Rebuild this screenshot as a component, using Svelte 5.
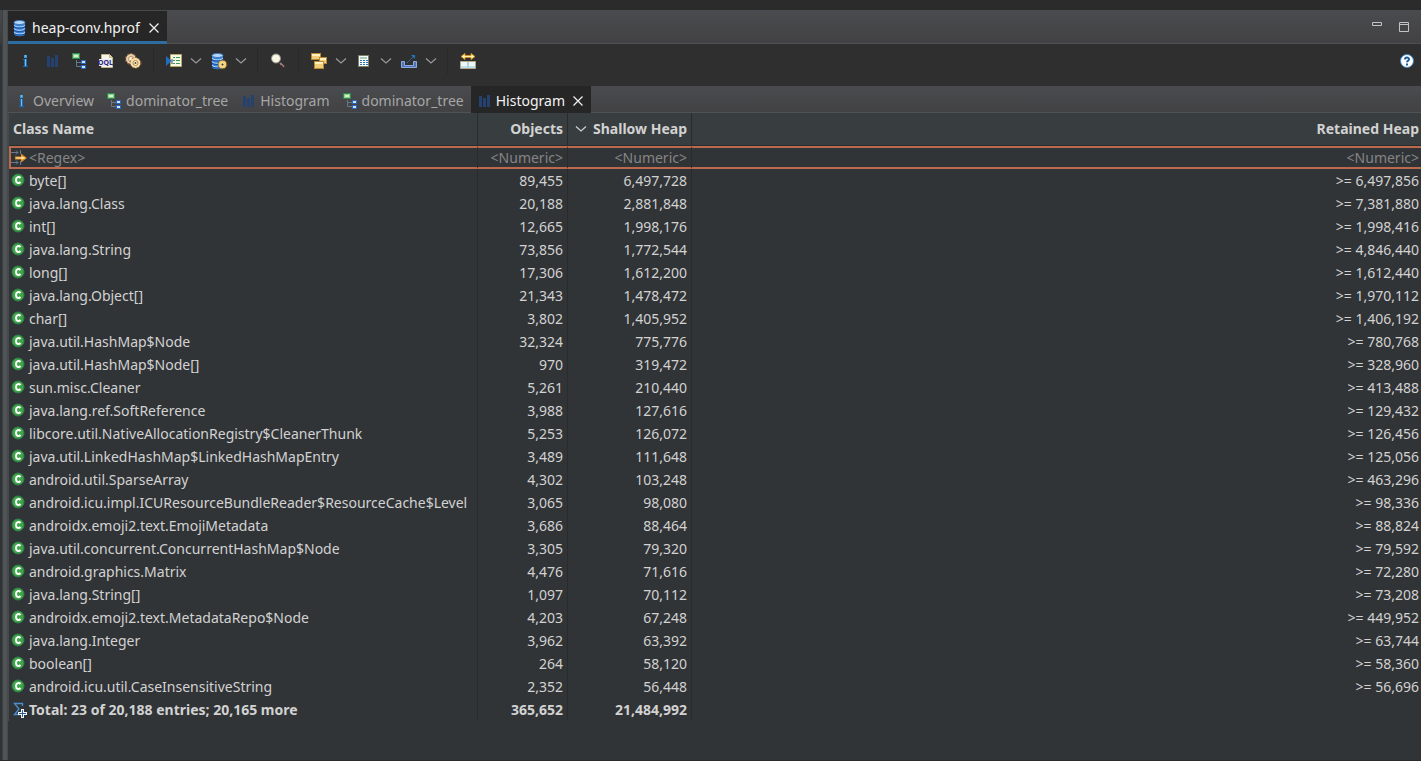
<script lang="ts">
	interface HeapRow {
		name: string;
		objects: number;
		shallow: number;
		retained: number;
	}

	const rows: HeapRow[] = [
		{ name: 'byte[]', objects: 89455, shallow: 6497728, retained: 6497856 },
		{ name: 'java.lang.Class', objects: 20188, shallow: 2881848, retained: 7381880 },
		{ name: 'int[]', objects: 12665, shallow: 1998176, retained: 1998416 },
		{ name: 'java.lang.String', objects: 73856, shallow: 1772544, retained: 4846440 },
		{ name: 'long[]', objects: 17306, shallow: 1612200, retained: 1612440 },
		{ name: 'java.lang.Object[]', objects: 21343, shallow: 1478472, retained: 1970112 },
		{ name: 'char[]', objects: 3802, shallow: 1405952, retained: 1406192 },
		{ name: 'java.util.HashMap$Node', objects: 32324, shallow: 775776, retained: 780768 },
		{ name: 'java.util.HashMap$Node[]', objects: 970, shallow: 319472, retained: 328960 },
		{ name: 'sun.misc.Cleaner', objects: 5261, shallow: 210440, retained: 413488 },
		{ name: 'java.lang.ref.SoftReference', objects: 3988, shallow: 127616, retained: 129432 },
		{ name: 'libcore.util.NativeAllocationRegistry$CleanerThunk', objects: 5253, shallow: 126072, retained: 126456 },
		{ name: 'java.util.LinkedHashMap$LinkedHashMapEntry', objects: 3489, shallow: 111648, retained: 125056 },
		{ name: 'android.util.SparseArray', objects: 4302, shallow: 103248, retained: 463296 },
		{ name: 'android.icu.impl.ICUResourceBundleReader$ResourceCache$Level', objects: 3065, shallow: 98080, retained: 98336 },
		{ name: 'androidx.emoji2.text.EmojiMetadata', objects: 3686, shallow: 88464, retained: 88824 },
		{ name: 'java.util.concurrent.ConcurrentHashMap$Node', objects: 3305, shallow: 79320, retained: 79592 },
		{ name: 'android.graphics.Matrix', objects: 4476, shallow: 71616, retained: 72280 },
		{ name: 'java.lang.String[]', objects: 1097, shallow: 70112, retained: 73208 },
		{ name: 'androidx.emoji2.text.MetadataRepo$Node', objects: 4203, shallow: 67248, retained: 449952 },
		{ name: 'java.lang.Integer', objects: 3962, shallow: 63392, retained: 63744 },
		{ name: 'boolean[]', objects: 264, shallow: 58120, retained: 58360 },
		{ name: 'android.icu.util.CaseInsensitiveString', objects: 2352, shallow: 56448, retained: 56696 }
	];

	const views = [
		{ icon: 'info', label: 'Overview' },
		{ icon: 'tree', label: 'dominator_tree' },
		{ icon: 'bars', label: 'Histogram' },
		{ icon: 'tree', label: 'dominator_tree' },
		{ icon: 'bars', label: 'Histogram' }
	];

	const toolGroups = [
		[
			{ icon: 'info', label: 'Overview', menu: false },
			{ icon: 'bars', label: 'Histogram', menu: false },
			{ icon: 'tree', label: 'Dominator tree', menu: false },
			{ icon: 'oql', label: 'Object query', menu: false },
			{ icon: 'gears', label: 'Thread overview', menu: false }
		],
		[
			{ icon: 'report', label: 'Run report', menu: true },
			{ icon: 'query', label: 'Query browser', menu: true }
		],
		[{ icon: 'search', label: 'Find object', menu: false }],
		[
			{ icon: 'group', label: 'Group by', menu: true },
			{ icon: 'calc', label: 'Calculate retained size', menu: true },
			{ icon: 'export', label: 'Export', menu: true }
		],
		[{ icon: 'compare', label: 'Compare', menu: false }]
	];

	let activeView = $state(4);

	const fmt = (n: number) => n.toLocaleString('en-US');
</script>

{#snippet icon(name: string)}
	<svg class="icon" width="16" height="16" viewBox="0 0 16 16" aria-hidden="true">
		{#if name === 'info'}
			<rect x="7" y="2" width="3" height="3" fill="#3c98dc" />
			<path d="M6 6h4v7h1v1H6v-1h1V7H6z" fill="#1c6cb5" />
			<path d="M8 6h1v7H8zM8 2h1v2H8z" fill="#6fc0f2" />
		{:else if name === 'bars'}
			<path d="M3 3h3v11H3zM7 5h3v9H7zM11 2h3v12h-3z" fill="#24416f" />
		{:else if name === 'tree'}
			<path d="M5.500 7v6.500H10M5.500 9.500H10" fill="none" stroke="#66788f" />
			<rect x="1.500" y=".5" width="7" height="5" fill="#8fd08c" stroke="#2e8a4e" />
			<rect x="3" y="2" width="4" height="2" fill="#d3f0c8" />
			<rect x="10.500" y="7.500" width="4" height="3" fill="#c9e7ff" stroke="#2a64bf" />
			<rect x="10.500" y="12.500" width="4" height="3" fill="#c9e7ff" stroke="#2a64bf" />
		{:else if name === 'oql'}
			<path d="M3.500 1.500h8l3 3v10h-11z" fill="#f8f5ea" stroke="#c3b48a" />
			<path d="M11.500 1.500v3h3" fill="#e8d9a8" stroke="#c3b48a" />
			<rect x="1" y="6" width="13" height="7" fill="#eceaf4" />
			<text class="oql-text" x="0" y="12">OQL</text>
		{:else if name === 'gears'}
			<circle cx="6" cy="6" r="5" fill="#e9cfa8" />
			<circle cx="6" cy="6" r="5.500" fill="none" stroke="#b17c50" stroke-dasharray="2 1.500" />
			<circle cx="6" cy="6" r="2.500" fill="#fff6e2" stroke="#b98a60" />
			<circle cx="10.500" cy="10" r="5" fill="#f6dfa6" />
			<circle cx="10.500" cy="10" r="5.500" fill="none" stroke="#94603a" stroke-dasharray="2 1.500" />
			<circle cx="10.500" cy="10" r="2.500" fill="#fff6d8" stroke="#b98748" />
			<circle cx="10.500" cy="10" r="1" fill="#5d4630" />
		{:else if name === 'report'}
			<path d="M4.500 1.500h11v12h-11z" fill="#f5f7e8" stroke="#b8a765" />
			<path d="M7 4.500h2M7 7.500h2M7 10.500h2M10 4.500h4M10 7.500h4M10 10.500h4" stroke="#3c9a54" />
			<path d="M0 3l5.500 5L0 13z" fill="#1f6fc0" />
			<path d="M6 6v5" stroke="#244a78" />
		{:else if name === 'query' || name === 'database'}
			<path d="M1 3v11c0 3 11 3 11 0V3z" fill="#3a83d8" />
			<path d="M1 5c1 2.500 10 2.500 11 0M1 8.500c1 2.500 10 2.500 11 0M1 12c1 2.500 10 2.500 11 0" fill="none" stroke="#b9dcff" />
			<path d="M1 6.500c1 2 10 2 11 0M1 10c1 2 10 2 11 0M1 13.500c1 2 10 2 11 0" fill="none" stroke="#1d4f9c" />
			<ellipse cx="6.500" cy="2.500" rx="5.500" ry="2" fill="#b5d9fa" stroke="#3b76bf" />
			{#if name === 'query'}
				<circle cx="11.500" cy="11.500" r="4" fill="#f3cf72" />
				<circle cx="11.500" cy="11.500" r="4.500" fill="none" stroke="#8c5a20" stroke-dasharray="2 1.500" />
				<circle cx="11.500" cy="11.500" r="1.500" fill="#4b3a22" stroke="#fff0b5" />
			{/if}
		{:else if name === 'search'}
			<path d="M10 10l4 4" stroke="#a08078" stroke-width="2" />
			<path d="M11 12l3 3" stroke="#5b2c2c" />
			<circle cx="6" cy="5.500" r="4.500" fill="#f8f5e2" stroke="#8e8e86" />
			<path d="M4 6c0-2 1-2 2-2" fill="none" stroke="#fff" />
		{:else if name === 'group'}
			<g fill="#f0cd78" stroke="#b88a38">
				<rect x=".5" y=".5" width="9" height="6" />
				<rect x="8.500" y="4.500" width="7" height="6" />
				<rect x="3.500" y="8.500" width="9" height="7" />
			</g>
			<path d="M1 2h8M9 6h6M4 10h8" stroke="#fff0bd" stroke-width="2" />
		{:else if name === 'calc'}
			<rect x="2.500" y="2.500" width="10" height="11" fill="#f6faf8" stroke="#7d7f68" />
			<rect x="4" y="4" width="7" height="2" fill="#a9cdb8" />
			<path d="M4 7.500h8M4 9.500h8M4 11.500h8" stroke="#2f74b0" stroke-dasharray="2 1" />
		{:else if name === 'export'}
			<path d="M.5 8.500h3v4h9v-4h3v6H.5z" fill="#5273b4" stroke="#8ea9e2" />
			<path d="M6 10l6-6" stroke="#2e7fc0" stroke-dasharray="2 1" />
			<path d="M10 2h4v4z" fill="#1f76b8" />
		{:else if name === 'compare'}
			<path d="M1 3.500l4-3v2h6v-2l4 3-4 3v-2H5v2z" fill="#fff0b0" stroke="#cf8f24" />
			<path d="M.5 8.500h15v7H.5z" fill="#eaf7fd" stroke="#b5aa88" />
			<path d="M8 9v6" stroke="#9aa39a" />
			<path d="M1 14h6M9 14h6" stroke="#b9e2f4" stroke-width="2" />
		{:else if name === 'filter'}
			<path d="M1 2.500h7M1 12.500h7M6 .5l2 2-2 2M6 10.500l2 2-2 2M10.500 0v4M10.500 11v4" fill="none" stroke="#6a7a90" />
			<path d="M5 6.500h6V3.500l6 4.500-6 4.500v-3H5z" fill="#de8d22" />
			<path d="M6 8h9M12 6.500v3M13 7v2" stroke="#fff3b8" />
		{:else if name === 'class'}
			<circle cx="8" cy="7" r="6" fill="#3fa648" stroke="#2f7d4c" />
			<path d="M10.500 5C9 3.200 6 3.700 6 7s3 3.800 4.500 2" fill="none" stroke="#fff" stroke-width="2" />
		{:else if name === 'total'}
			<path d="M12.500 4V1.500H4.500L9 7l-4.500 5.500H9" fill="none" stroke="#4a90d0" stroke-width="1.300" />
			<path d="M11 7h3v3h3v3h-3v3h-3v-3H8v-3h3z" fill="#f4f7fa" />
			<path d="M12.500 8v7M9 11.500h7" stroke="#2d5f93" />
		{/if}
	</svg>
{/snippet}

{#snippet chevron()}
	<svg class="chevron" width="12" height="8" viewBox="0 0 12 8" aria-hidden="true">
		<path d="M1 1.500l5 4.500 5-4.500" fill="none" stroke="currentColor" stroke-width="1.200" />
	</svg>
{/snippet}

{#snippet cross()}
	<svg width="12" height="12" viewBox="0 0 12 12" aria-hidden="true">
		<path d="M1.500 1.500l9 9M10.500 1.500l-9 9" fill="none" stroke="currentColor" stroke-width="1.200" />
	</svg>
{/snippet}

<div class="workbench">
	<div class="neighbour"></div>
	<div class="sash"></div>
	<main class="editor">
		<header class="editor-tabs">
			<div class="editor-tab">
				<button type="button" class="tab-button">{@render icon('database')}heap-conv.hprof</button>
				<button type="button" class="close" aria-label="Close heap-conv.hprof">{@render cross()}</button>
			</div>
			<div class="window-controls">
				<button type="button" aria-label="Minimize">
					<svg width="12" height="12" viewBox="0 0 12 12"><path d="M1.500 1.500h9v3h-9z" fill="none" stroke="#c3c3c3" /></svg>
				</button>
				<button type="button" aria-label="Maximize">
					<svg width="12" height="12" viewBox="0 0 12 12"><path d="M1.500 1.500h9v9h-9zM1.500 3.500h9" fill="none" stroke="#c3c3c3" /></svg>
				</button>
			</div>
		</header>

		<div class="toolbar" role="toolbar" aria-label="Heap tools">
			{#each toolGroups as group, i (i)}
				{#if i > 0}
					<span class="separator"></span>
				{/if}
				{#each group as tool (tool.icon)}
					<button type="button" class="tool" aria-label={tool.label}>{@render icon(tool.icon)}</button>
					{#if tool.menu}
						<button type="button" class="tool-menu" aria-label={`${tool.label} menu`}>{@render chevron()}</button>
					{/if}
				{/each}
			{/each}
			<button type="button" class="help" aria-label="Help">
				<svg width="16" height="16" viewBox="0 0 16 16" aria-hidden="true">
					<circle cx="8" cy="8" r="6.500" fill="#fff" stroke="#3d84c4" />
					<path d="M6 6.500C6 4 10 4 10 6.200c0 1.500-2 1.500-2 3M8 10.500v2" fill="none" stroke="#1c5a9c" stroke-width="2" />
				</svg>
			</button>
		</div>

		<div class="view-tabs" role="tablist">
			{#each views as view, i (i)}
				<div class="view-tab" class:active={i === activeView}>
					<button
						type="button"
						class="tab-button"
						role="tab"
						aria-selected={i === activeView}
						onclick={() => (activeView = i)}>{@render icon(view.icon)}{view.label}</button
					>
					{#if i === activeView}
						<button type="button" class="close" aria-label={`Close ${view.label}`}>{@render cross()}</button>
					{/if}
				</div>
			{/each}
		</div>

		<table>
			<colgroup>
				<col class="col-name" />
				<col class="col-objects" />
				<col class="col-shallow" />
				<col />
			</colgroup>
			<thead>
				<tr class="head">
					<th class="name" scope="col">Class Name</th>
					<th scope="col">Objects</th>
					<th scope="col" aria-sort="descending">
						<div class="sorted">{@render chevron()}Shallow Heap</div>
					</th>
					<th scope="col">Retained Heap</th>
				</tr>
				<tr class="filter">
					<td class="name">
						<div class="cell">
							{@render icon('filter')}
							<input type="text" placeholder="<Regex>" aria-label="Filter by class name" />
						</div>
					</td>
					<td><input type="text" placeholder="<Numeric>" aria-label="Filter by objects" /></td>
					<td><input type="text" placeholder="<Numeric>" aria-label="Filter by shallow heap" /></td>
					<td><input type="text" placeholder="<Numeric>" aria-label="Filter by retained heap" /></td>
				</tr>
			</thead>
			<tbody>
				{#each rows as row (row.name)}
					<tr>
						<td class="name"><div class="cell">{@render icon('class')}{row.name}</div></td>
						<td>{fmt(row.objects)}</td>
						<td>{fmt(row.shallow)}</td>
						<td>&gt;= {fmt(row.retained)}</td>
					</tr>
				{/each}
			</tbody>
			<tfoot>
				<tr>
					<td class="name"><div class="cell">{@render icon('total')}Total: 23 of 20,188 entries; 20,165 more</div></td>
					<td>365,652</td>
					<td>21,484,992</td>
					<td></td>
				</tr>
			</tfoot>
		</table>
	</main>
</div>

<style>
	:global(body) {
		background: #2b2b2b;
	}
	.workbench {
		display: flex;
		box-sizing: border-box;
		min-height: 100vh;
		padding: 10px 0 1px;
		font-family: 'Noto Sans', 'Open Sans', sans-serif;
		font-size: 14px;
		line-height: 22px;
		color: #d2d2d2;
	}
	button,
	input {
		margin: 0;
		padding: 0;
		border: none;
		background: none;
		color: inherit;
		font: inherit;
	}
	button {
		display: flex;
		align-items: center;
	}
	svg {
		display: block;
		flex: none;
		overflow: visible;
	}
	.oql-text {
		fill: #2c2878;
		font-size: 7px;
		font-weight: 700;
	}
	.neighbour {
		width: 2px;
		background: linear-gradient(#48494c, #3a3b3d 33px, #313437 34px);
	}
	.sash {
		width: 6px;
		box-sizing: border-box;
		border-left: 1px solid #3b3f41;
		border-right: 1px solid #45494c;
		background: #4f5456;
	}
	.editor {
		flex: 1;
		min-width: 0;
		background: #313437;
	}
	.editor-tabs {
		display: flex;
		justify-content: space-between;
		box-sizing: border-box;
		height: 34px;
		background: linear-gradient(#4a4b4e, #424244);
		border-bottom: 1px solid #505052;
	}
	.editor-tab {
		display: flex;
		gap: 8px;
		box-sizing: border-box;
		height: 33px;
		margin-top: 1px;
		padding: 3px 7px 0 5px;
		border-bottom: 3px solid #2f6c9f;
		background: #262626;
		color: #f2f2f2;
	}
	.tab-button {
		gap: 3px;
		white-space: nowrap;
	}
	.window-controls {
		display: flex;
		align-items: center;
		gap: 15px;
		padding-right: 11px;
	}
	.toolbar {
		display: flex;
		align-items: center;
		box-sizing: border-box;
		height: 42px;
		padding: 0 6px 8px 4px;
		background: #2f2f2f;
	}
	.tool {
		padding: 0 6px 0 5px;
	}
	.tool-menu {
		padding: 0 4px 0 2px;
		color: #9a9a9a;
	}
	.separator {
		width: 1px;
		height: 26px;
		margin: 0 7px 0 6px;
		background: #292929;
	}
	.help {
		margin-left: auto;
	}
	.view-tabs {
		display: flex;
		box-sizing: border-box;
		height: 27px;
		background: linear-gradient(#4a4b4e, #424244);
		border-bottom: 1px solid #505254;
		color: #a6a6a6;
	}
	.view-tab {
		display: flex;
		gap: 7px;
		padding: 3px 7px 0 5px;
	}
	.view-tab .tab-button {
		gap: 4px;
	}
	.view-tab.active {
		background: #262626;
		box-shadow: 0 1px #262626;
		color: #f2f2f2;
	}
	table {
		width: 100%;
		table-layout: fixed;
		border-spacing: 0;
		border-left: 1px solid #45494c;
	}
	.col-name {
		width: 469px;
	}
	.col-objects {
		width: 90px;
	}
	.col-shallow {
		width: 124px;
	}
	th,
	td {
		box-sizing: border-box;
		height: 23px;
		padding: 0 4px 0 0;
		border-right: 1px solid #292c2e;
		text-align: right;
		white-space: nowrap;
	}
	th:last-child,
	td:last-child {
		padding-right: 2px;
		border-right: none;
	}
	.name {
		padding: 0 0 0 1px;
		text-align: left;
	}
	.head th {
		height: 33px;
		border-bottom: 1px solid #292c2e;
		background: #383d3f;
		font-weight: 700;
	}
	.head .name {
		padding-left: 4px;
	}
	.sorted {
		display: flex;
		align-items: center;
		justify-content: flex-end;
		gap: 6px;
	}
	.cell {
		display: flex;
		align-items: center;
		gap: 3px;
	}
	.filter td {
		border-top: 2px solid #bb6a4e;
		border-bottom: 2px solid #bb6a4e;
	}
	.filter .name {
		box-shadow: inset 2px 0 #bb6a4e;
	}
	.filter input {
		display: block;
		width: 100%;
		height: 19px;
		text-align: inherit;
		outline: none;
	}
	.filter input::placeholder {
		color: #858585;
		opacity: 1;
	}
	tfoot {
		font-weight: 700;
	}
</style>
